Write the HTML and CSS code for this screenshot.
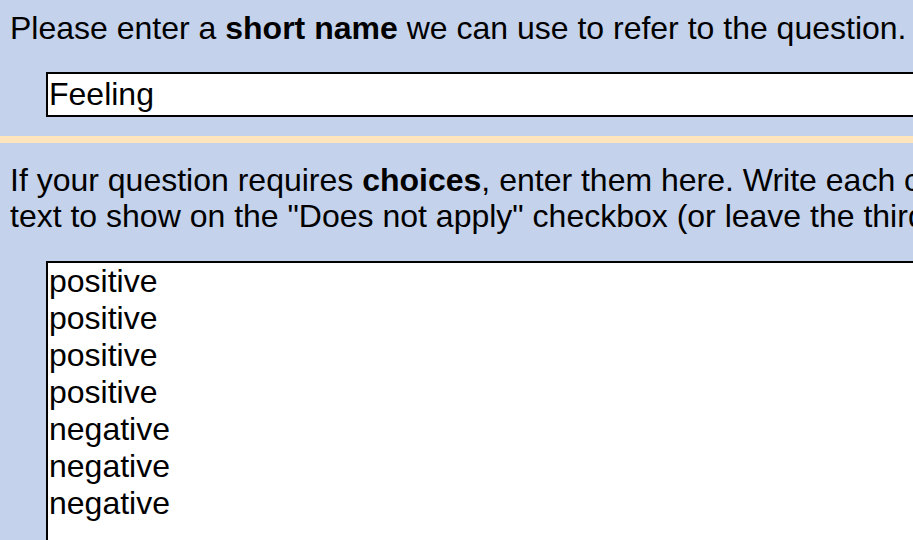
FILE: index.html
```html
<!DOCTYPE html>
<html lang="en">
<head>
<meta charset="utf-8">
<title>Question</title>
<link rel="stylesheet" href="styles.css">
</head>
<body>
<div class="section section-name">
  <p class="prompt">Please enter a <b>short name</b> we can use to refer to the question.</p>
  <input class="name-input" type="text" value="Feeling">
</div>
<div class="stripe"></div>
<div class="section section-choices">
  <p class="prompt">If your question requires <b>choices</b>, enter them here. Write each choice on its own line. If you like, add the<br>text to show on the "Does not apply" checkbox (or leave the third line empty).</p>
  <textarea class="choices-input">positive
positive
positive
positive
negative
negative
negative
</textarea>
</div>
</body>
</html>
```
FILE: styles.css
```css
html, body {
  margin: 0;
  padding: 0;
  overflow: hidden;
  background: #c4d2eb;
}
body {
  font-family: "Liberation Sans", Arial, sans-serif;
  font-size: 32px;
  color: #000;
  width: 913px;
  height: 540px;
}
.section {
  padding-left: 10px;
}
.section-name {
  padding-top: 10px;
  padding-bottom: 19px;
}
.section-choices {
  padding-top: 19px;
}
.prompt {
  margin: 0;
  white-space: nowrap;
  line-height: 36px;
}
.name-input {
  display: block;
  box-sizing: border-box;
  margin: 26px 0 0 36px;
  width: 1100px;
  height: 45px;
  padding: 0 1px;
  border: 2px solid #000;
  background: #fff;
  font-family: "Liberation Sans", Arial, sans-serif;
  font-size: 32px;
  color: #000;
  outline: none;
}
.stripe {
  height: 7px;
  background: #fee5bd;
}
.choices-input {
  display: block;
  box-sizing: border-box;
  margin: 27px 0 0 36px;
  width: 1100px;
  height: 400px;
  padding: 0 1px;
  border: 2px solid #000;
  background: #fff;
  font-family: "Liberation Sans", Arial, sans-serif;
  font-size: 32px;
  line-height: normal;
  color: #000;
  resize: none;
  overflow: hidden;
  outline: none;
}
```
